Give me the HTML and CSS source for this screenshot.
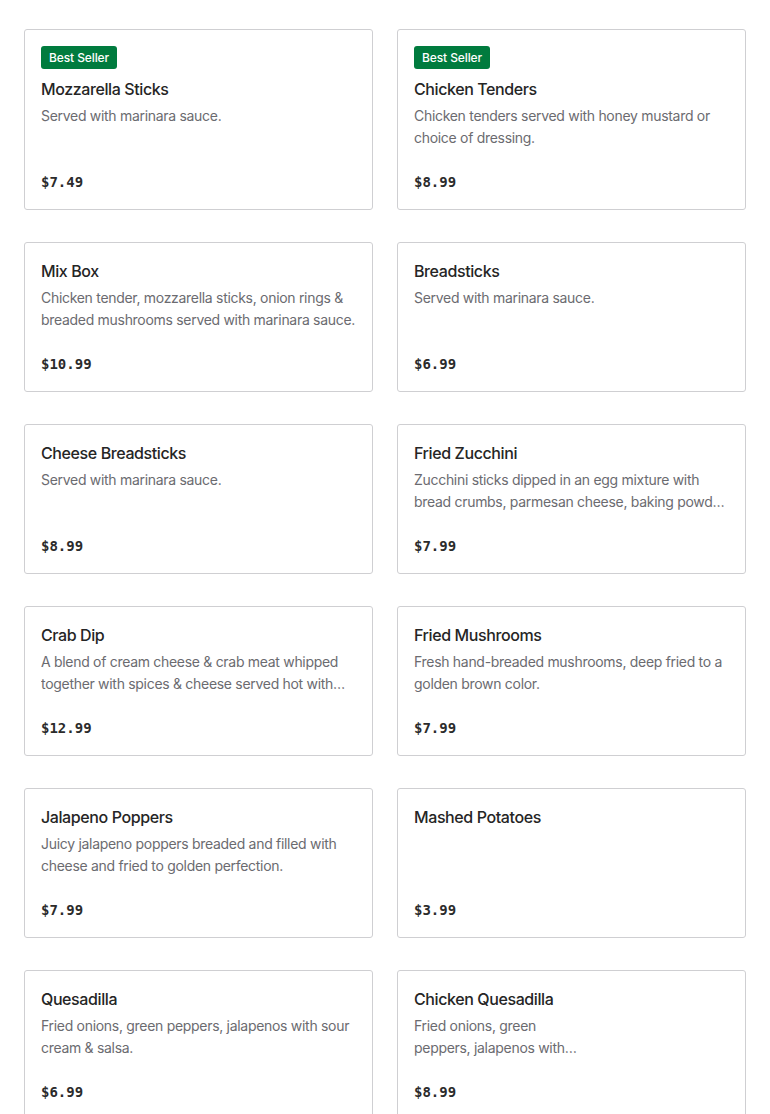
FILE: index.html
```html
<!DOCTYPE html>
<html>
<head>
<meta charset="utf-8">
<link rel="stylesheet" href="styles.css">
</head>
<body>
<div class="grid">
  <div class="card">
    <span class="badge">Best Seller</span>
    <div class="title">Mozzarella Sticks</div>
    <div class="desc">Served with marinara sauce.</div>
    <div class="price">$7.49</div>
  </div>
  <div class="card">
    <span class="badge">Best Seller</span>
    <div class="title">Chicken Tenders</div>
    <div class="desc">Chicken tenders served with honey mustard or choice of dressing.</div>
    <div class="price">$8.99</div>
  </div>
  <div class="card">
    <div class="title">Mix Box</div>
    <div class="desc">Chicken tender, mozzarella sticks, onion rings &amp; breaded mushrooms served with marinara sauce.</div>
    <div class="price">$10.99</div>
  </div>
  <div class="card">
    <div class="title">Breadsticks</div>
    <div class="desc">Served with marinara sauce.</div>
    <div class="price">$6.99</div>
  </div>
  <div class="card">
    <div class="title">Cheese Breadsticks</div>
    <div class="desc">Served with marinara sauce.</div>
    <div class="price">$8.99</div>
  </div>
  <div class="card">
    <div class="title">Fried Zucchini</div>
    <div class="desc">Zucchini sticks dipped in an egg mixture with bread crumbs, parmesan cheese, baking powder, and fried to golden perfection.</div>
    <div class="price">$7.99</div>
  </div>
  <div class="card">
    <div class="title">Crab Dip</div>
    <div class="desc">A blend of cream cheese &amp; crab meat whipped together with spices &amp; cheese served hot with tortilla chips.</div>
    <div class="price">$12.99</div>
  </div>
  <div class="card">
    <div class="title">Fried Mushrooms</div>
    <div class="desc">Fresh hand-breaded mushrooms, deep fried to a golden brown color.</div>
    <div class="price">$7.99</div>
  </div>
  <div class="card">
    <div class="title">Jalapeno Poppers</div>
    <div class="desc">Juicy jalapeno poppers breaded and filled with cheese and fried to golden perfection.</div>
    <div class="price">$7.99</div>
  </div>
  <div class="card">
    <div class="title">Mashed Potatoes</div>
    <div class="desc"></div>
    <div class="price">$3.99</div>
  </div>
  <div class="card">
    <div class="title">Quesadilla</div>
    <div class="desc">Fried onions, green peppers, jalapenos with sour cream &amp; salsa.</div>
    <div class="price">$6.99</div>
  </div>
  <div class="card">
    <div class="title">Chicken Quesadilla</div>
    <div class="desc">Fried onions, green<br>peppers, jalapenos with…</div>
    <div class="price">$8.99</div>
  </div>
</div>
</body>
</html>
```
FILE: styles.css
```css
html, body {
  margin: 0;
  padding: 0;
  background: #fff;
}
body {
  font-family: "Inter", "Liberation Sans", sans-serif;
  color: #2b2b2b;
}
.grid {
  display: grid;
  grid-template-columns: 1fr 1fr;
  column-gap: 24px;
  row-gap: 32px;
  padding: 29px 24px 24px;
}
.card {
  border: 1px solid #cfcfd2;
  border-radius: 3px;
  padding: 16px 16px 17px;
  display: flex;
  flex-direction: column;
  align-items: flex-start;
}
.badge {
  background: #007b3e;
  color: #fff;
  font-size: 12px;
  font-weight: 500;
  line-height: 23px;
  height: 23px;
  padding: 0 8px;
  border-radius: 3px;
  margin-bottom: 8px;
  letter-spacing: -0.1px;
}
.title {
  font-size: 16px;
  font-weight: 500;
  line-height: 24px;
  color: #252525;
  letter-spacing: -0.4px;
}
.desc {
  margin-top: 4px;
  font-size: 14px;
  line-height: 22px;
  height: 44px;
  color: #6b6b70;
  letter-spacing: -0.3px;
  display: -webkit-box;
  -webkit-line-clamp: 2;
  -webkit-box-orient: vertical;
  overflow: hidden;
}
.price {
  margin-top: 23px;
  font-family: "DejaVu Sans Mono", "Liberation Mono", monospace;
  font-weight: bold;
  font-size: 14px;
  line-height: 20px;
  color: #2b2b2b;
}
```
